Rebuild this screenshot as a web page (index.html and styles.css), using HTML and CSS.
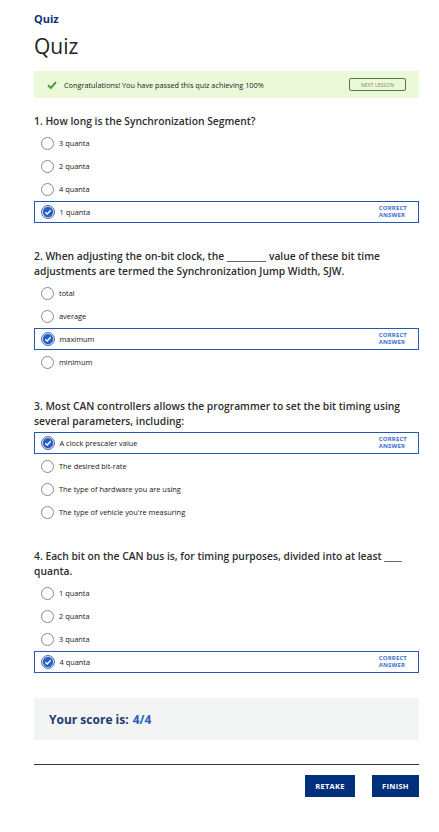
FILE: index.html
```html
<!DOCTYPE html>
<html lang="en">
<head>
<meta charset="utf-8">
<title>Quiz</title>
<link rel="stylesheet" href="styles.css">
</head>
<body>
<main class="page">
  <div class="crumb">Quiz</div>
  <h1 class="title">Quiz</h1>

  <div class="banner">
    <svg class="banner-check" width="10" height="8" viewBox="0 0 10 8"><path d="M1 4.2 L3.8 7 L9 1.2" fill="none" stroke="#4c9a3c" stroke-width="2"/></svg>
    <span class="banner-text">Congratulations! You have passed this quiz achieving 100%</span>
    <span class="next-btn">NEXT LESSON</span>
  </div>

  <section class="question">
    <h2 class="q-title">1. How long is the Synchronization Segment?</h2>
    <div class="options">
      <div class="option"><span class="radio"></span><span class="opt-text">3 quanta</span></div>
      <div class="option"><span class="radio"></span><span class="opt-text">2 quanta</span></div>
      <div class="option"><span class="radio"></span><span class="opt-text">4 quanta</span></div>
      <div class="option selected"><svg class="radio-on" width="14" height="14" viewBox="0 0 14 14"><circle cx="7" cy="7" r="6.4" fill="none" stroke="#2457b8" stroke-width="1"/><circle cx="7" cy="7" r="5.2" fill="#2a5fc2"/><path d="M4.3 7.2 L6.2 9 L9.7 5.2" fill="none" stroke="#fff" stroke-width="1.4"/></svg><span class="opt-text">1 quanta</span><span class="correct"><span class="cl">CORRECT</span><span class="cl">ANSWER</span></span></div>
    </div>
  </section>

  <section class="question">
    <h2 class="q-title">2. When adjusting the on-bit clock, the _________ value of these bit time adjustments are termed the Synchronization Jump Width, SJW.</h2>
    <div class="options">
      <div class="option"><span class="radio"></span><span class="opt-text">total</span></div>
      <div class="option"><span class="radio"></span><span class="opt-text">average</span></div>
      <div class="option selected"><svg class="radio-on" width="14" height="14" viewBox="0 0 14 14"><circle cx="7" cy="7" r="6.4" fill="none" stroke="#2457b8" stroke-width="1"/><circle cx="7" cy="7" r="5.2" fill="#2a5fc2"/><path d="M4.3 7.2 L6.2 9 L9.7 5.2" fill="none" stroke="#fff" stroke-width="1.4"/></svg><span class="opt-text">maximum</span><span class="correct"><span class="cl">CORRECT</span><span class="cl">ANSWER</span></span></div>
      <div class="option"><span class="radio"></span><span class="opt-text">minimum</span></div>
    </div>
  </section>

  <section class="question">
    <h2 class="q-title">3. Most CAN controllers allows the programmer to set the bit timing using several parameters, including:</h2>
    <div class="options">
      <div class="option selected"><svg class="radio-on" width="14" height="14" viewBox="0 0 14 14"><circle cx="7" cy="7" r="6.4" fill="none" stroke="#2457b8" stroke-width="1"/><circle cx="7" cy="7" r="5.2" fill="#2a5fc2"/><path d="M4.3 7.2 L6.2 9 L9.7 5.2" fill="none" stroke="#fff" stroke-width="1.4"/></svg><span class="opt-text">A clock prescaler value</span><span class="correct"><span class="cl">CORRECT</span><span class="cl">ANSWER</span></span></div>
      <div class="option"><span class="radio"></span><span class="opt-text">The desired bit-rate</span></div>
      <div class="option"><span class="radio"></span><span class="opt-text">The type of hardware you are using</span></div>
      <div class="option"><span class="radio"></span><span class="opt-text">The type of vehicle you're measuring</span></div>
    </div>
  </section>

  <section class="question">
    <h2 class="q-title">4. Each bit on the CAN bus is, for timing purposes, divided into at least ____ quanta.</h2>
    <div class="options">
      <div class="option"><span class="radio"></span><span class="opt-text">1 quanta</span></div>
      <div class="option"><span class="radio"></span><span class="opt-text">2 quanta</span></div>
      <div class="option"><span class="radio"></span><span class="opt-text">3 quanta</span></div>
      <div class="option selected"><svg class="radio-on" width="14" height="14" viewBox="0 0 14 14"><circle cx="7" cy="7" r="6.4" fill="none" stroke="#2457b8" stroke-width="1"/><circle cx="7" cy="7" r="5.2" fill="#2a5fc2"/><path d="M4.3 7.2 L6.2 9 L9.7 5.2" fill="none" stroke="#fff" stroke-width="1.4"/></svg><span class="opt-text">4 quanta</span><span class="correct"><span class="cl">CORRECT</span><span class="cl">ANSWER</span></span></div>
    </div>
  </section>

  <div class="score">Your score is: <span class="score-val">4/4</span></div>

  <hr class="rule">

  <div class="actions">
    <span class="btn retake">RETAKE</span>
    <span class="btn finish">FINISH</span>
  </div>
</main>
</body>
</html>
```

FILE: styles.css
```css
* { box-sizing: border-box; }
html, body { margin: 0; padding: 0; background: #fff; }
body { font-family: "Open Sans", "Noto Sans", sans-serif; color: #333; }

.page { padding: 12px 20px 0 34px; }

.crumb { font-size: 11px; line-height: 14px; font-weight: 700; color: #0b2f7a; }
.title { margin: 7px 0 0; font-size: 21px; line-height: 26px; font-weight: 400; color: #222; }

.banner {
  margin-top: 12px; height: 27px; background: #ebf9d9;
  display: flex; align-items: center; padding: 0 13px 0 13px;
}
.banner-check { margin-right: 7px; }
.banner-text { font-size: 7.3px; color: #222; flex: 1; }
.next-btn {
  width: 57px; height: 13px; border: 1px solid #4f7f46; border-radius: 2px;
  font-size: 5px; color: #7a8a78; display: flex; align-items: center; justify-content: center;
  letter-spacing: 0.1px;
}

.question { margin-top: 16px; }
.question + .question { margin-top: 26px; }
.q-title { margin: 0; font-size: 10.3px; line-height: 15px; font-weight: 600; color: #2d2d2d; }

.options { margin-top: 3px; display: flex; flex-direction: column; gap: 1px; }
.option {
  height: 22px; display: flex; align-items: center; padding: 0 11px 0 6px;
  border: 1px solid transparent;
}
.option.selected { border: 1.5px solid #2358b8; }
.radio {
  width: 13px; height: 13px; border: 1px solid #8a8a8a; border-radius: 50%;
  flex: none; background: #fff;
}
.radio-on { flex: none; margin-left: -0.5px; }
.opt-text { margin-left: 5px; font-size: 7.4px; color: #161616; flex: 1; }
.correct {
  display: flex; flex-direction: column;
  font-size: 6px; line-height: 6.8px; font-weight: 700; color: #3c6fd0;
  letter-spacing: 0.15px;
}
.cl { display: block; height: 6.8px; overflow: visible; }

.score {
  margin-top: 25px; height: 42px; background: #f3f4f4; padding-left: 15px;
  display: flex; align-items: center; gap: 4px;
  font-size: 12px; font-weight: 700; color: #1e3a72;
}
.score-val { color: #2a5cbb; }

.rule { margin: 24px 0 0; border: 0; border-top: 1.5px solid #333; height: 0; }

.actions { margin-top: 10px; display: flex; justify-content: flex-end; gap: 17px; }
.btn {
  height: 22px; background: #00307c; color: #fff; font-size: 7.5px; font-weight: 700;
  display: flex; align-items: center; justify-content: center; letter-spacing: 0.3px;
}
.retake { width: 50px; }
.finish { width: 47px; }
```
